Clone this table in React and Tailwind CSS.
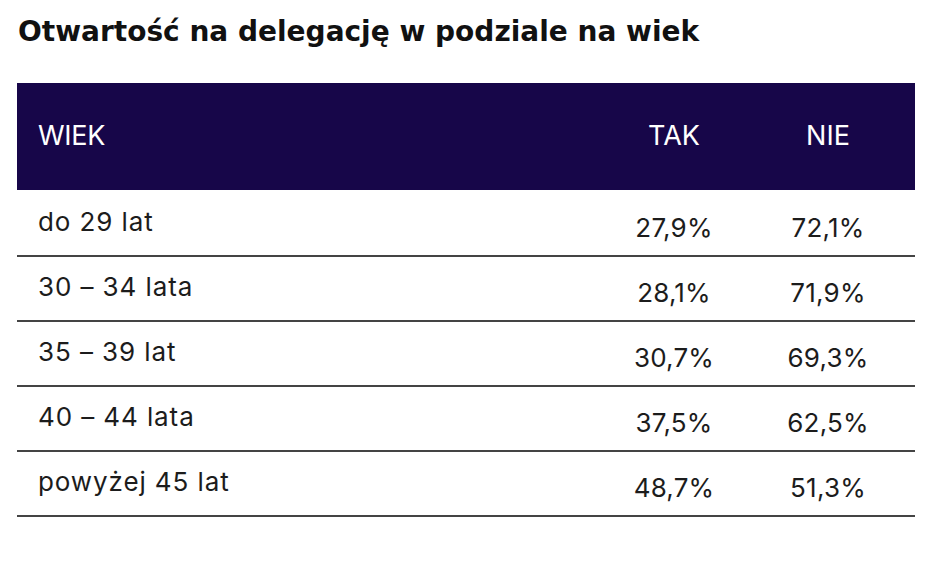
import React from 'react';

const rows = [
  { age: 'do 29 lat', yes: '27,9%', no: '72,1%' },
  { age: '30 – 34 lata', yes: '28,1%', no: '71,9%' },
  { age: '35 – 39 lat', yes: '30,7%', no: '69,3%' },
  { age: '40 – 44 lata', yes: '37,5%', no: '62,5%' },
  { age: 'powyżej 45 lat', yes: '48,7%', no: '51,3%' },
];

const App = () => {
  return (
    <div className="w-[948px] h-[564px] bg-white font-['Inter',sans-serif] text-[#1c1c1c]">
      {/* Title */}
      <h1 className="pl-[18px] pt-[14px] font-['DejaVu_Sans',sans-serif] text-[28px] leading-[36px] font-bold text-[#111]">
        Otwartość na delegację w podziale na wiek
      </h1>

      {/* Table */}
      <div className="ml-[17px] mt-[33px] w-[898px]">
        <div className="flex items-center h-[107px] bg-[#170649] text-white text-[27px] pr-[10px]">
          <div className="flex-1 pl-[21px] tracking-[-0.3px]">WIEK</div>
          <div className="w-[154px] text-center">TAK</div>
          <div className="w-[154px] text-center">NIE</div>
        </div>

        <div className="pt-[2px]">
          {rows.map((row, index) => (
            <div
              key={index}
              className="flex h-[65px] border-b-2 border-[#444] text-[26px] leading-[30px] pr-[10px]"
            >
              <div className="flex-1 pl-[21px] pt-[15px] tracking-[0.9px]">{row.age}</div>
              <div className="w-[154px] text-center pt-[21px] tracking-[0.2px]">{row.yes}</div>
              <div className="w-[154px] text-center pt-[21px] tracking-[0.2px]">{row.no}</div>
            </div>
          ))}
        </div>
      </div>
    </div>
  );
};

export default App;
